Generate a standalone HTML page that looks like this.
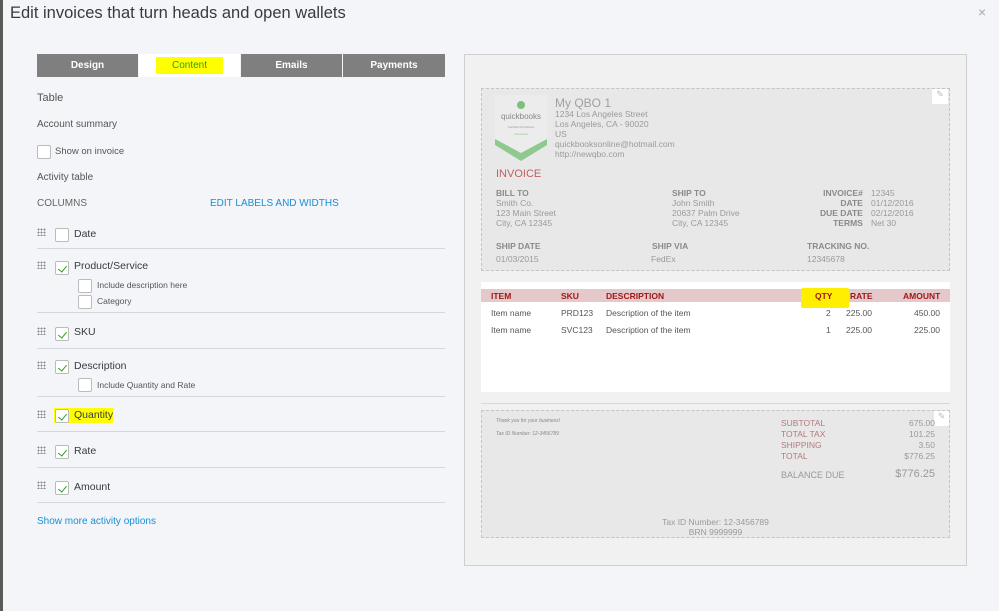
<!DOCTYPE html>
<html><head><meta charset="utf-8"><style>
*{margin:0;padding:0;box-sizing:border-box}
body{width:999px;height:611px;overflow:hidden;background:#f4f5f8;font-family:"Liberation Sans",sans-serif;position:relative;color:#393a3d}
.a{position:absolute;white-space:nowrap}
.lbl{font-size:10px;color:#555}
.cb{position:absolute;width:14px;height:14px;border:1px solid #bbb;background:#fff;border-radius:2px}
.cb.c::after{content:"";position:absolute;left:4px;top:2px;width:4px;height:7px;border:solid #2ca01c;border-width:0 1.5px 1.5px 0;transform:rotate(40deg);box-sizing:content-box}
.grip{position:absolute;width:9px;height:8px;background-image:radial-gradient(#888 0.8px,transparent 1px);background-size:3px 3px}
.hr{position:absolute;left:37px;width:408px;height:1px;background:#d4d7dc}
.tab{position:absolute;top:54px;height:23px;background:#7f7f7f;color:#fff;font-size:10px;font-weight:bold;text-align:center;line-height:23px}
.g{color:#9a9a9a;font-size:8.5px;line-height:10px}
.gb{color:#8a8a8a;font-size:8.5px;font-weight:bold}
.r{color:#b47a7a;font-size:8.5px;line-height:11px}
.t{font-size:10.5px}
</style></head><body>
<div class="a" style="left:0;top:0;width:3px;height:611px;background:#5a5a5a"></div>
<div class="a" style="left:10px;top:4px;font-size:16.5px;color:#393a3d">Edit invoices that turn heads and open wallets</div>
<div class="a" style="left:978px;top:4px;font-size:14px;color:#aaa">×</div>

<div class="tab" style="left:37px;width:101px">Design</div>
<div class="tab" style="left:139px;width:101px;background:#fff"><span style="background:#ffff00;color:#2ca01c;font-weight:normal;padding:3px 16px">Content</span></div>
<div class="tab" style="left:241px;width:101px">Emails</div>
<div class="tab" style="left:343px;width:102px">Payments</div>

<div class="a" style="left:37px;top:92px;font-size:11px;color:#555">Table</div>
<div class="a" style="left:37px;top:119px;font-size:10px;color:#555">Account summary</div>
<div class="cb" style="left:37px;top:145px"></div>
<div class="a lbl" style="left:55px;top:146px;font-size:9.5px">Show on invoice</div>
<div class="a" style="left:37px;top:172px;font-size:10px;color:#555">Activity table</div>
<div class="a" style="left:37px;top:198px;font-size:10px;color:#666">COLUMNS</div>
<div class="a" style="left:210px;top:198px;font-size:10px;color:#1a8ed6">EDIT LABELS AND WIDTHS</div>

<div class="grip" style="left:37px;top:228px"></div><div class="cb" style="left:55px;top:228px"></div><div class="a t" style="left:74px;top:228px">Date</div>
<div class="hr" style="top:248px"></div>
<div class="grip" style="left:37px;top:261px"></div><div class="cb c" style="left:55px;top:261px"></div><div class="a t" style="left:74px;top:260px">Product/Service</div>
<div class="cb" style="left:78px;top:279px"></div><div class="a lbl" style="left:97px;top:280px;font-size:8.5px">Include description here</div>
<div class="cb" style="left:78px;top:295px"></div><div class="a lbl" style="left:97px;top:296px;font-size:8.5px">Category</div>
<div class="hr" style="top:312px"></div>
<div class="grip" style="left:37px;top:327px"></div><div class="cb c" style="left:55px;top:327px"></div><div class="a t" style="left:74px;top:326px">SKU</div>
<div class="hr" style="top:348px"></div>
<div class="grip" style="left:37px;top:361px"></div><div class="cb c" style="left:55px;top:360px"></div><div class="a t" style="left:74px;top:360px">Description</div>
<div class="cb" style="left:78px;top:378px"></div><div class="a lbl" style="left:97px;top:380px;font-size:8.5px">Include Quantity and Rate</div>
<div class="hr" style="top:396px"></div>
<div class="a" style="left:54px;top:408px;width:59px;height:15px;background:#ffff00"></div>
<div class="grip" style="left:37px;top:410px"></div><div class="cb c" style="left:55px;top:409px"></div><div class="a t" style="left:74px;top:409px">Quantity</div>
<div class="hr" style="top:431px"></div>
<div class="grip" style="left:37px;top:446px"></div><div class="cb c" style="left:55px;top:445px"></div><div class="a t" style="left:74px;top:445px">Rate</div>
<div class="hr" style="top:467px"></div>
<div class="grip" style="left:37px;top:481px"></div><div class="cb c" style="left:55px;top:481px"></div><div class="a t" style="left:74px;top:481px">Amount</div>
<div class="hr" style="top:502px"></div>
<div class="a" style="left:37px;top:516px;font-size:10px;color:#1a8ed6">Show more activity options</div>

<div class="a" style="left:464px;top:54px;width:503px;height:512px;background:#f1f1f1;border:1px solid #cfcfcf"></div>
<div class="a" style="left:481px;top:88px;width:469px;height:183px;background:#e8e8e8;border:1px dashed #c4c4c4"></div>
<div class="a" style="left:932px;top:89px;width:16px;height:15px;background:#fff;color:#bbb;font-size:9px;text-align:center">✎</div>
<svg class="a" style="left:495px;top:95px" width="53" height="72"><path d="M0 0H52V47L26 63L0 47Z" fill="#ececec"/><path d="M0 44L26 58L52 44V50L26 66L0 50Z" fill="#8fc98f"/><circle cx="26" cy="10" r="4" fill="#7cc07c"/><text x="26" y="24" font-size="8" fill="#888" text-anchor="middle" font-family="Liberation Sans">quickbooks</text><text x="26" y="33" font-size="3" fill="#999" text-anchor="middle" font-family="Liberation Sans">Certified ProAdvisor</text><text x="26" y="40" font-size="3" fill="#8c8" text-anchor="middle" font-family="Liberation Sans">Advanced</text></svg>
<div class="a" style="left:555px;top:96px;font-size:12px;color:#a0a0a0">My QBO 1</div>
<div class="a g" style="left:555px;top:109px">1234 Los Angeles Street<br>Los Angeles, CA - 90020<br>US<br>quickbooksonline@hotmail.com<br>http://newqbo.com</div>
<div class="a" style="left:496px;top:168px;font-size:11px;color:#c06060">INVOICE</div>
<div class="a gb" style="left:496px;top:188px">BILL TO</div>
<div class="a g" style="left:496px;top:198px">Smith Co.<br>123 Main Street<br>City, CA 12345</div>
<div class="a gb" style="left:672px;top:188px">SHIP TO</div>
<div class="a g" style="left:672px;top:198px">John Smith<br>20637 Palm Drive<br>City, CA 12345</div>
<div class="a gb" style="left:820px;top:188px;text-align:right;line-height:10px">INVOICE#<br>DATE<br>DUE DATE<br>TERMS</div>
<div class="a g" style="left:871px;top:188px">12345<br>01/12/2016<br>02/12/2016<br>Net 30</div>
<div class="a gb" style="left:496px;top:241px">SHIP DATE</div><div class="a g" style="left:496px;top:254px">01/03/2015</div>
<div class="a gb" style="left:652px;top:241px">SHIP VIA</div><div class="a g" style="left:651px;top:254px">FedEx</div>
<div class="a gb" style="left:807px;top:241px">TRACKING NO.</div><div class="a g" style="left:807px;top:254px">12345678</div>

<div class="a" style="left:481px;top:282px;width:469px;height:110px;background:#fff"></div>
<div class="a" style="left:481px;top:289px;width:469px;height:13px;background:#e5c8ca"></div>
<div class="a" style="left:801px;top:288px;width:48px;height:20px;background:#ffee00;border-radius:2px"></div>
<div class="a" style="left:491px;top:291px;font-size:8.5px;font-weight:bold;color:#a01818">ITEM</div>
<div class="a" style="left:561px;top:291px;font-size:8.5px;font-weight:bold;color:#a01818">SKU</div>
<div class="a" style="left:606px;top:291px;font-size:8.5px;font-weight:bold;color:#a01818">DESCRIPTION</div>
<div class="a" style="left:815px;top:291px;font-size:8.5px;font-weight:bold;color:#a01818">QTY</div>
<div class="a" style="left:850px;top:291px;font-size:8.5px;font-weight:bold;color:#a01818">RATE</div>
<div class="a" style="left:903px;top:291px;font-size:8.5px;font-weight:bold;color:#a01818">AMOUNT</div>
<div class="a" style="left:491px;top:305px;font-size:8.5px;color:#555;line-height:17px">Item name<br>Item name</div>
<div class="a" style="left:561px;top:305px;font-size:8.5px;color:#555;line-height:17px">PRD123<br>SVC123</div>
<div class="a" style="left:606px;top:305px;font-size:8.5px;color:#555;line-height:17px">Description of the item<br>Description of the item</div>
<div class="a" style="left:826px;top:305px;font-size:8.5px;color:#555;line-height:17px">2<br>1</div>
<div class="a" style="left:846px;top:305px;font-size:8.5px;color:#555;line-height:17px">225.00<br>225.00</div>
<div class="a" style="left:914px;top:305px;font-size:8.5px;color:#555;line-height:17px">450.00<br>225.00</div>

<div class="a" style="left:481px;top:403px;width:469px;height:1px;background:#d8d8d8"></div>
<div class="a" style="left:481px;top:410px;width:469px;height:128px;background:#e8e8e8;border:1px dashed #c4c4c4"></div>
<div class="a" style="left:934px;top:411px;width:15px;height:15px;background:#fff;color:#bbb;font-size:9px;text-align:center">✎</div>
<div class="a" style="left:496px;top:418px;font-size:5px;font-style:italic;color:#888">Thank you for your business!</div>
<div class="a" style="left:496px;top:431px;font-size:5px;font-style:italic;color:#888">Tax ID Number: 12-3456789</div>
<div class="a r" style="left:781px;top:418px">SUBTOTAL<br>TOTAL TAX<br>SHIPPING<br>TOTAL</div>
<div class="a g" style="left:880px;top:418px;width:55px;text-align:right;line-height:11px">675.00<br>101.25<br>3.50<br>$776.25</div>
<div class="a" style="left:781px;top:470px;font-size:9px;color:#999">BALANCE DUE</div>
<div class="a" style="left:880px;top:468px;width:55px;text-align:right;font-size:11px;color:#999">$776.25</div>
<div class="a" style="left:481px;top:517px;width:469px;text-align:center;font-size:8.5px;color:#999;line-height:10px">Tax ID Number: 12-3456789<br>BRN 9999999</div>
</body></html>
